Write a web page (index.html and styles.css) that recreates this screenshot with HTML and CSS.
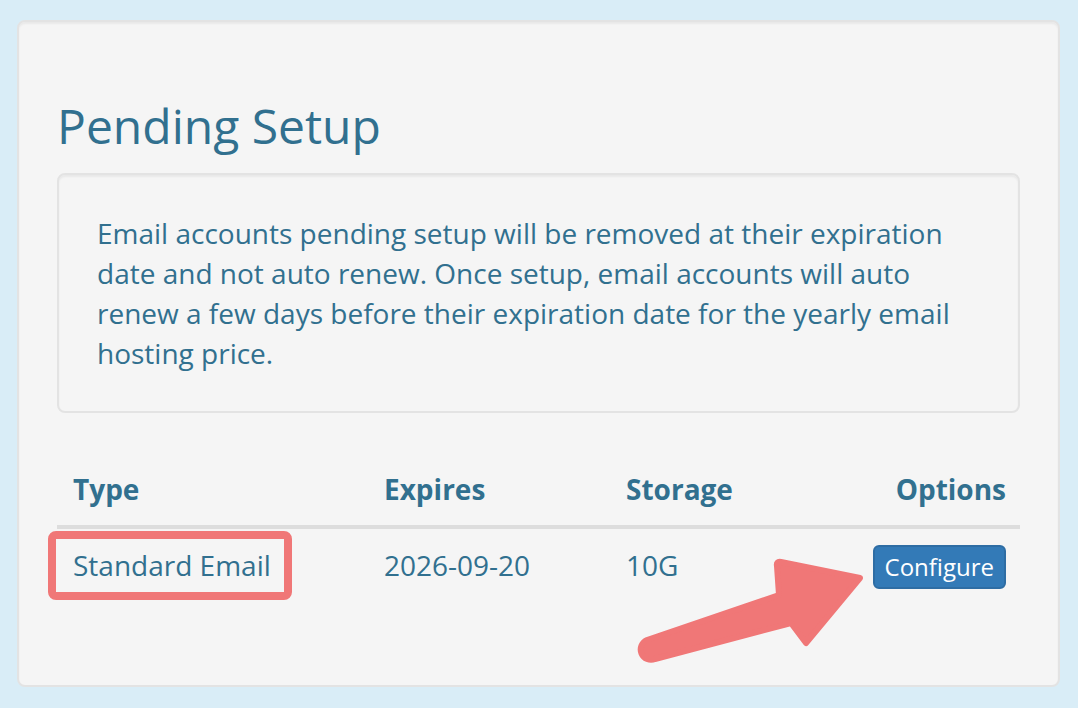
FILE: index.html
```html
<!DOCTYPE html>
<html lang="en">
<head>
    <meta charset="UTF-8">
    <meta name="viewport" content="width=device-width, initial-scale=1.0">
    <title>Pending Setup</title>
    <link rel="stylesheet" href="styles.css">
</head>
<body>
    <div class="panel">
        <h3 class="title">Pending Setup</h3>
        <div class="well">
            Email accounts pending setup will be removed at their expiration date and not auto renew. Once setup, email accounts will auto renew a few days before their expiration date for the yearly email hosting price.
        </div>
        <table class="email-table">
            <thead>
                <tr>
                    <th class="col-type">Type</th>
                    <th class="col-expires">Expires</th>
                    <th class="col-storage">Storage</th>
                    <th class="col-options">Options</th>
                </tr>
            </thead>
            <tbody>
                <tr>
                    <td>Standard Email</td>
                    <td>2026-09-20</td>
                    <td>10G</td>
                    <td class="col-options"><button class="btn-configure">Configure</button></td>
                </tr>
            </tbody>
        </table>
    </div>

    <!-- annotation overlay -->
    <svg class="annotations" width="1078" height="708" viewBox="0 0 1078 708">
        <rect x="52" y="535" width="236" height="61" rx="4" fill="none" stroke="#f07777" stroke-width="8"/>
        <path d="M 647 640 L 779 595 L 777 566 Q 776 561 781 562 L 860 578 L 806 643 L 791 623 L 655 659 A 10 10 0 0 1 647 640 Z"
              fill="#f07777" stroke="#f07777" stroke-width="6" stroke-linejoin="round"/>
    </svg>
</body>
</html>
```

FILE: styles.css
```css
body {
    margin: 20px 18px 22px 17px;
    background-color: #d9edf7;
    font-family: 'Open Sans', 'Noto Sans', sans-serif;
    font-size: 28px;
    line-height: 40px;
    color: #31708f;
}
.panel {
    background-color: #f5f5f5;
    border: 2px solid #e3e3e3;
    border-radius: 8px;
    box-shadow: inset 0 2px 2px rgba(0, 0, 0, 0.05);
    padding: 38px 38px 80px;
}
.title {
    font-size: 48px;
    font-weight: 400;
    line-height: 52px;
    margin: 40px 0 21px;
}
.well {
    background-color: #f5f5f5;
    border: 2px solid #e3e3e3;
    border-radius: 8px;
    box-shadow: inset 0 2px 2px rgba(0, 0, 0, 0.05);
    padding: 38px;
    margin-bottom: 40px;
}
.email-table {
    width: 100%;
    border-collapse: collapse;
    border-spacing: 0;
}
.email-table th,
.email-table td {
    padding: 16px;
    text-align: left;
    vertical-align: top;
}
.email-table th {
    font-weight: 700;
    border-bottom: 4px solid #ddd;
}
.col-type {
    width: 279px;
}
.col-expires {
    width: 210px;
}
.col-storage {
    width: 190px;
}
.email-table .col-options {
    text-align: right;
    padding-right: 14px;
}
.btn-configure {
    font-family: 'Open Sans', 'Noto Sans', sans-serif;
    font-size: 24px;
    line-height: 36px;
    padding: 2px 10px;
    color: #fff;
    background-color: #337ab7;
    border: 2px solid #2e6da4;
    border-radius: 6px;
    cursor: pointer;
}
.annotations {
    position: absolute;
    left: 0;
    top: 0;
    pointer-events: none;
}
```
